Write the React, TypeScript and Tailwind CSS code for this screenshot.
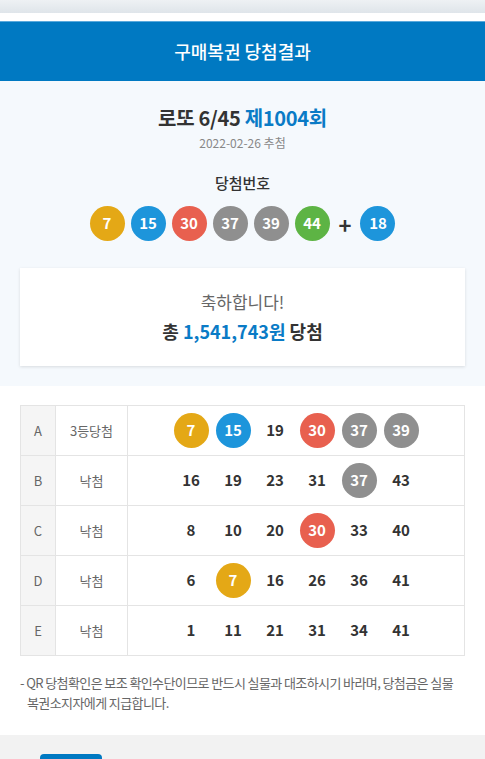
import { ReactElement } from 'react';

type Ball = { n: number; hit?: boolean };

const ballColor = (n: number): string => {
  if (n <= 10) return 'bg-[#e4a816]';
  if (n <= 20) return 'bg-[#1d95db]';
  if (n <= 30) return 'bg-[#e8604f]';
  if (n <= 40) return 'bg-[#8f8f8f]';
  return 'bg-[#5db444]';
};

const winning = [7, 15, 30, 37, 39, 44];
const bonus = 18;

const games: Array<{ key: string; result: string; nums: number[] }> = [
  { key: 'A', result: '3등당첨', nums: [7, 15, 19, 30, 37, 39] },
  { key: 'B', result: '낙첨', nums: [16, 19, 23, 31, 37, 43] },
  { key: 'C', result: '낙첨', nums: [8, 10, 20, 30, 33, 40] },
  { key: 'D', result: '낙첨', nums: [6, 7, 16, 26, 36, 41] },
  { key: 'E', result: '낙첨', nums: [1, 11, 21, 31, 34, 41] },
];

function LottoBall({ n }: Ball): ReactElement {
  return (
    <span
      className={`flex h-[35px] w-[35px] items-center justify-center rounded-full text-[15px] font-bold text-white ${ballColor(n)}`}
    >
      {n}
    </span>
  );
}

export default function App(): ReactElement {
  return (
    <div
      className="min-h-[759px] w-full bg-white text-[#333]"
      style={{ fontFamily: '"Noto Sans CJK KR", "Noto Sans", sans-serif' }}
    >
      <div className="h-[13px] bg-gradient-to-b from-[#eef1f4] to-[#dfe5ea]" />
      <div className="h-[8px] bg-white" />
      <div className="flex h-[60px] items-center justify-center bg-[#0079c2] border-t border-[#5aa9dc]">
        <h1 className="text-[18px] font-medium text-white">구매복권 당첨결과</h1>
      </div>

      <div className="bg-[#f5f9fd] px-5 pb-5 pt-[22px]">
        <div className="flex flex-col items-center">
          <p className="text-[20px] font-bold leading-[30px] tracking-[-0.3px] text-[#333]">
            로또 6/45 <span className="text-[#0a7bc6]">제1004회</span>
          </p>
          <p className="mt-[1px] text-[12px] leading-[18px] text-[#888]">2022-02-26 추첨</p>
          <p className="mt-[20px] text-[15px] font-medium leading-[22px] text-[#333]">당첨번호</p>
          <div className="mt-[12px] flex items-center gap-[6px]">
            {winning.map((n) => (
              <LottoBall key={n} n={n} />
            ))}
            <span className="mx-[3px] text-[22px] font-bold leading-none text-[#333]">+</span>
            <LottoBall n={bonus} />
          </div>
        </div>

        <div className="mt-[27px] flex h-[98px] flex-col items-center justify-center bg-white shadow-[0_1px_3px_rgba(0,0,0,0.12)]">
          <p className="text-[17px] leading-[26px] text-[#666]">축하합니다!</p>
          <p className="mt-[2px] text-[18px] font-bold leading-[28px] text-[#333]">
            총 <span className="text-[#0a7bc6]">1,541,743원</span> 당첨
          </p>
        </div>
      </div>

      <div className="px-5 pt-[19px]">
        <div className="border border-[#e4e4e4]">
          {games.map((g, i) => (
            <div
              key={g.key}
              className={`flex ${i > 0 ? 'h-[50px] border-t border-[#e4e4e4]' : 'h-[49px]'}`}
            >
              <div className="flex w-[35px] items-center justify-center border-r border-[#e4e4e4] bg-[#f5f5f5] text-[13px] text-[#666]">
                {g.key}
              </div>
              <div className="flex w-[72px] items-center justify-center border-r border-[#e4e4e4] text-[13px] text-[#666]">
                {g.result}
              </div>
              <div className="flex flex-1 items-center justify-center gap-[7px]">
                {g.nums.map((n) =>
                  winning.includes(n) ? (
                    <LottoBall key={n} n={n} />
                  ) : (
                    <span
                      key={n}
                      className="flex h-[35px] w-[35px] items-center justify-center text-[15px] font-bold text-[#333]"
                    >
                      {n}
                    </span>
                  ),
                )}
              </div>
            </div>
          ))}
        </div>

        <p className="mt-[17px] pl-[7px] -indent-[7px] text-[13px] leading-[20px] tracking-[-0.6px] text-[#666]">
          - QR 당첨확인은 보조 확인수단이므로 반드시 실물과 대조하시기 바라며, 당첨금은 실물 복권소지자에게 지급합니다.
        </p>
      </div>

      <div className="mt-[22px] h-[60px] bg-[#f2f2f2] px-10 pt-[19px]">
        <div className="h-[30px] w-[62px] rounded-[4px] bg-[#0079c2]" />
      </div>
    </div>
  );
}
